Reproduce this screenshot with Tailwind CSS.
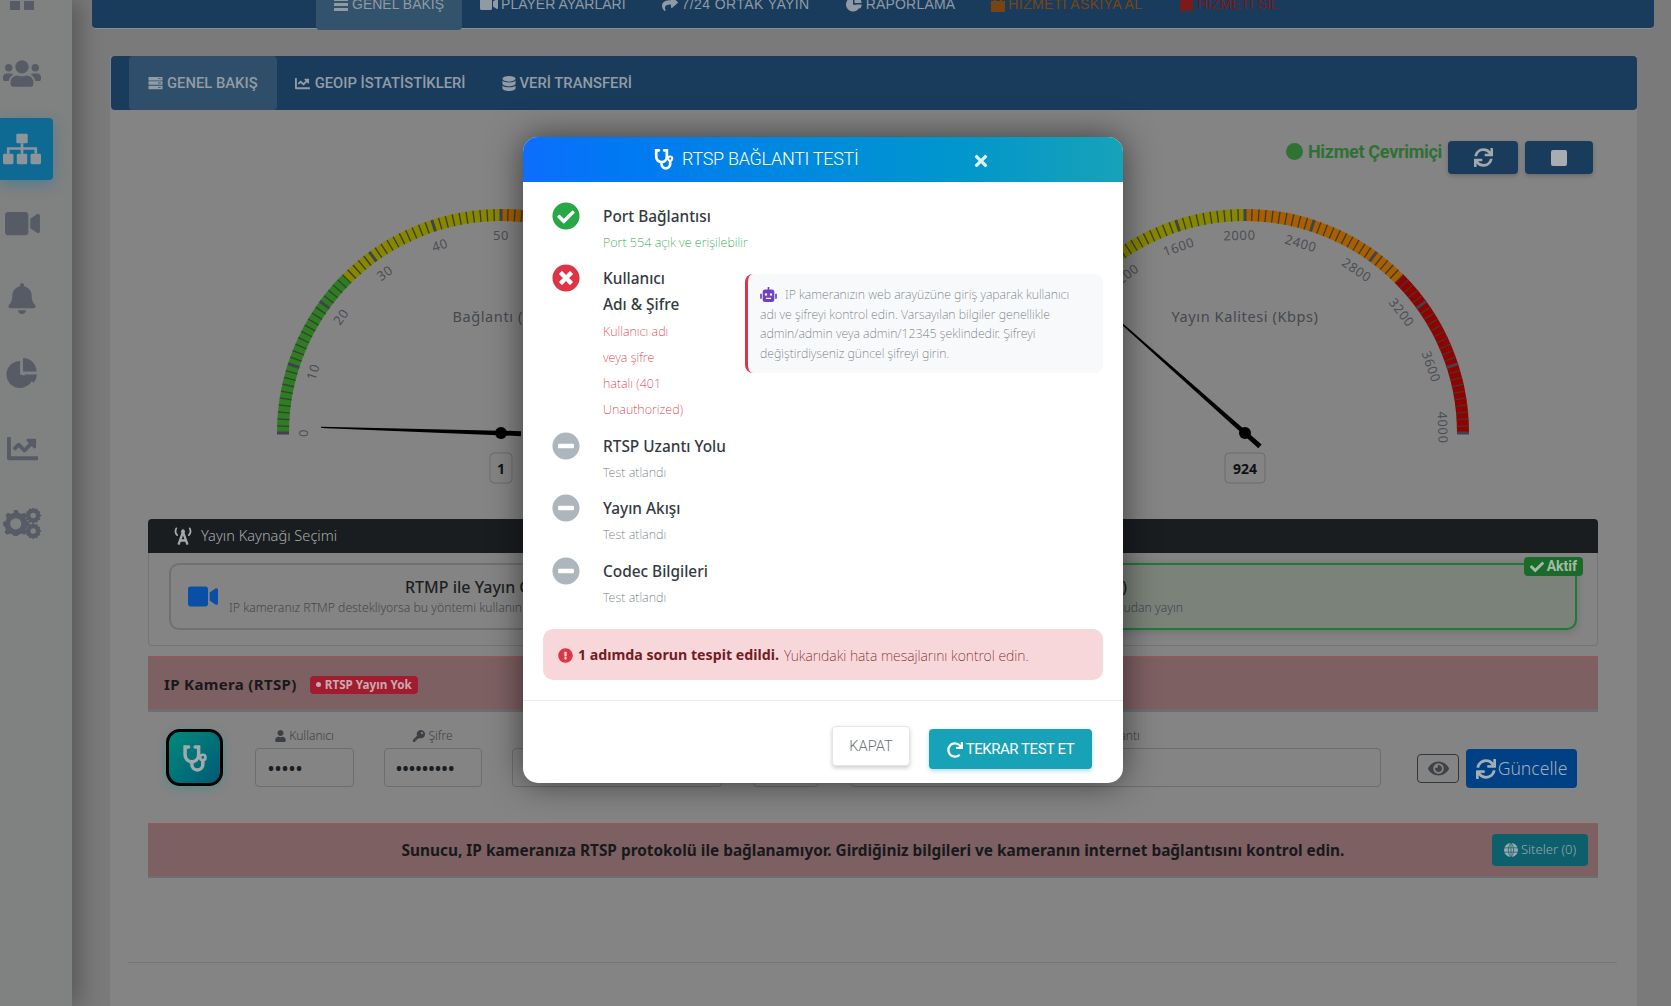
<!DOCTYPE html>
<html lang="tr">
<head>
  <meta charset="UTF-8" />
  <title>RTSP Bağlantı Testi</title>
  <script src="https://cdn.jsdelivr.net/npm/@tailwindcss/browser@4"></script>
</head>

<body class="relative h-[1006px] overflow-hidden bg-[#7a7a7a] font-['Roboto',sans-serif]">

  <!-- icon set -->
  <svg class="hidden">
    <symbol id="i-sync" viewBox="0 0 512 512"><path d="M440.65 12.57l4 82.77A247.16 247.16 0 0 0 255.83 8C134.73 8 33.91 94.92 12.29 209.82A12 12 0 0 0 24.09 224h49.05a12 12 0 0 0 11.67-9.26 175.91 175.91 0 0 1 317-56.94l-101.46-4.86a12 12 0 0 0-12.57 12v47.41a12 12 0 0 0 12 12H500a12 12 0 0 0 12-12V12a12 12 0 0 0-12-12h-47.37a12 12 0 0 0-11.98 12.57zM255.83 432a175.61 175.61 0 0 1-146-77.8l101.8 4.87a12 12 0 0 0 12.57-12v-47.4a12 12 0 0 0-12-12H12a12 12 0 0 0-12 12V500a12 12 0 0 0 12 12h47.35a12 12 0 0 0 12-12.6l-4.15-82.57A247.17 247.17 0 0 0 255.83 504c121.11 0 221.93-86.92 243.55-201.82a12 12 0 0 0-11.8-14.18h-49.05a12 12 0 0 0-11.67 9.26A175.86 175.86 0 0 1 255.83 432z"/></symbol>
    <symbol id="i-check-circle" viewBox="0 0 512 512"><path d="M504 256c0 136.967-111.033 248-248 248S8 392.967 8 256 119.033 8 256 8s248 111.033 248 248zM227.314 387.314l184-184c6.248-6.248 6.248-16.379 0-22.627l-22.627-22.627c-6.248-6.249-16.379-6.249-22.628 0L216 308.118l-70.059-70.059c-6.248-6.248-16.379-6.248-22.628 0l-22.627 22.627c-6.248 6.248-6.248 16.379 0 22.627l104 104c6.249 6.25 16.379 6.25 22.628.001z"/></symbol>
    <symbol id="i-times-circle" viewBox="0 0 512 512"><path d="M256 8C119 8 8 119 8 256s111 248 248 248 248-111 248-248S393 8 256 8zm121.6 313.1c4.7 4.7 4.7 12.3 0 17L338 377.6c-4.7 4.7-12.3 4.7-17 0L256 312l-65.1 65.6c-4.7 4.7-12.3 4.7-17 0L134.4 338c-4.7-4.7-4.7-12.3 0-17l65.6-65-65.6-65.1c-4.7-4.7-4.7-12.3 0-17l39.6-39.6c4.7-4.7 12.3-4.7 17 0l65 65.7 65.1-65.6c4.7-4.7 12.3-4.7 17 0l39.6 39.6c4.7 4.7 4.7 12.3 0 17L312 256l65.6 65.1z"/></symbol>
    <symbol id="i-minus-circle" viewBox="0 0 512 512"><path d="M256 8C119 8 8 119 8 256s111 248 248 248 248-111 248-248S393 8 256 8zM124 296c-6.6 0-12-5.4-12-12v-56c0-6.6 5.4-12 12-12h264c6.6 0 12 5.4 12 12v56c0 6.6-5.4 12-12 12H124z"/></symbol>
    <symbol id="i-exclamation" viewBox="0 0 512 512"><path d="M504 256c0 136.997-111.043 248-248 248S8 392.997 8 256C8 119.083 119.043 8 256 8s248 111.083 248 248zm-248 50c-25.405 0-46 20.595-46 46s20.595 46 46 46 46-20.595 46-46-20.595-46-46-46zm-43.673-165.346l7.418 136c.347 6.364 5.609 11.346 11.982 11.346h48.546c6.373 0 11.635-4.982 11.982-11.346l7.418-136c.375-6.874-5.098-12.654-11.982-12.654h-63.383c-6.884 0-12.356 5.78-11.981 12.654z"/></symbol>
    <symbol id="i-redo" viewBox="0 0 512 512"><path d="M500.33 0h-47.41a12 12 0 0 0-12 12.57l4 82.76A247.42 247.42 0 0 0 256 8C119.34 8 7.9 119.53 8 256.19 8.1 393.07 119.1 504 256 504a247.1 247.1 0 0 0 166.18-63.91 12 12 0 0 0 .48-17.43l-34-34a12 12 0 0 0-16.38-.55A176 176 0 1 1 402.1 157.8l-101.53-4.87a12 12 0 0 0-12.57 12v47.41a12 12 0 0 0 12 12h200.33a12 12 0 0 0 12-12V12a12 12 0 0 0-12-12z"/></symbol>
    <symbol id="i-check" viewBox="0 0 512 512"><path d="M173.898 439.404l-166.4-166.4c-9.997-9.997-9.997-26.206 0-36.204l36.203-36.204c9.997-9.998 26.207-9.998 36.204 0L192 312.69 432.095 72.596c9.997-9.997 26.207-9.997 36.204 0l36.203 36.204c9.997 9.997 9.997 26.206 0 36.204l-294.4 294.401c-9.998 9.997-26.207 9.997-36.204-.001z"/></symbol>
    <symbol id="i-times" viewBox="0 0 352 512"><path d="M242.72 256l100.07-100.07c12.28-12.28 12.28-32.19 0-44.48l-22.24-22.24c-12.28-12.28-32.19-12.28-44.48 0L176 189.28 75.93 89.21c-12.28-12.28-32.19-12.28-44.48 0L9.21 111.45c-12.28 12.28-12.28 32.19 0 44.48L109.28 256 9.21 356.07c-12.28 12.28-12.28 32.19 0 44.48l22.24 22.24c12.28 12.28 32.2 12.28 44.48 0L176 322.72l100.07 100.07c12.28 12.28 32.2 12.28 44.48 0l22.24-22.24c12.28-12.28 12.28-32.19 0-44.48L242.72 256z"/></symbol>
    <symbol id="i-video" viewBox="0 0 576 512"><path d="M336.2 64H47.8C21.4 64 0 85.4 0 111.8v288.4C0 426.6 21.4 448 47.8 448h288.4c26.4 0 47.8-21.4 47.8-47.8V111.8c0-26.4-21.4-47.8-47.8-47.8zm189.4 37.7L416 177.3v157.4l109.6 75.5c21.2 14.6 50.4-.3 50.4-25.8V127.5c0-25.4-29.1-40.4-50.4-25.8z"/></symbol>
    <symbol id="i-bell" viewBox="0 0 448 512"><path d="M224 512c35.32 0 63.97-28.65 63.97-64H160.03c0 35.35 28.65 64 63.97 64zm215.39-149.71c-19.32-20.76-55.47-51.99-55.47-154.29 0-77.7-54.48-139.9-127.94-155.16V32c0-17.67-14.32-32-31.98-32s-31.98 14.33-31.98 32v20.84C118.56 68.1 64.08 130.3 64.08 208c0 102.3-36.15 133.53-55.47 154.29-6 6.45-8.66 14.16-8.61 21.71.11 16.4 12.98 32 32.1 32h383.8c19.12 0 32-15.6 32.1-32 .05-7.55-2.61-15.27-8.61-21.71z"/></symbol>
    <symbol id="i-chart" viewBox="0 0 512 512"><path d="M496 384H64V80c0-8.84-7.16-16-16-16H16C7.16 64 0 71.16 0 80v336c0 17.67 14.33 32 32 32h464c8.84 0 16-7.16 16-16v-32c0-8.84-7.16-16-16-16zM464 96H345.94c-21.38 0-32.09 25.85-16.97 40.97l32.4 32.4L288 242.75l-73.37-73.37c-12.5-12.5-32.76-12.5-45.25 0l-68.69 68.69c-6.25 6.25-6.25 16.38 0 22.63l22.62 22.62c6.25 6.25 16.38 6.25 22.63 0L192 237.25l73.37 73.37c12.5 12.5 32.76 12.5 45.25 0l96-96 32.4 32.4c15.12 15.12 40.97 4.41 40.97-16.97V112c.01-8.84-7.15-16-15.99-16z"/></symbol>
    <symbol id="i-user" viewBox="0 0 448 512"><path d="M224 256c70.7 0 128-57.3 128-128S294.7 0 224 0 96 57.3 96 128s57.3 128 128 128zm89.6 32h-16.7c-22.2 10.2-46.9 16-72.9 16s-50.6-5.8-72.9-16h-16.7C60.2 288 0 348.2 0 422.4V464c0 26.5 21.5 48 48 48h352c26.5 0 48-21.5 48-48v-41.6c0-74.2-60.2-134.4-134.4-134.4z"/></symbol>
    <symbol id="i-users" viewBox="0 0 640 512"><path d="M96 224c35.3 0 64-28.7 64-64s-28.7-64-64-64-64 28.7-64 64 28.7 64 64 64zm448 0c35.3 0 64-28.7 64-64s-28.7-64-64-64-64 28.7-64 64 28.7 64 64 64zm32 32h-64c-17.6 0-33.5 7.1-45.1 18.6 40.3 22.1 68.9 62 75.1 109.4h66c17.7 0 32-14.3 32-32v-32c0-35.3-28.7-64-64-64zm-256 0c61.9 0 112-50.1 112-112S381.9 32 320 32 208 82.1 208 144s50.1 112 112 112zm76.8 32h-8.3c-20.8 10-43.9 16-68.5 16s-47.6-6-68.5-16h-8.3C179.6 288 128 339.6 128 403.2V432c0 26.5 21.5 48 48 48h288c26.5 0 48-21.5 48-48v-28.8c0-63.6-51.6-115.2-115.2-115.2zm-223.7-13.4C161.5 263.1 145.6 256 128 256H64c-35.3 0-64 28.7-64 64v32c0 17.7 14.3 32 32 32h65.9c6.3-47.4 34.9-87.3 75.2-109.4z"/></symbol>
    <symbol id="i-eye" viewBox="0 0 576 512"><path d="M572.52 241.4C518.29 135.59 410.93 64 288 64S57.68 135.64 3.48 241.41a32.35 32.35 0 0 0 0 29.19C57.71 376.41 165.07 448 288 448s230.32-71.64 284.52-177.41a32.35 32.35 0 0 0 0-29.19zM288 400a144 144 0 1 1 144-144 143.93 143.93 0 0 1-144 144zm0-240a95.31 95.31 0 0 0-25.31 3.79 47.85 47.85 0 0 1-66.9 66.9A95.78 95.78 0 1 0 288 160z"/></symbol>
    <symbol id="i-share" viewBox="0 0 512 512"><path d="M503.691 189.836L327.687 37.851C312.281 24.546 288 35.347 288 56.015v80.053C127.371 137.907 0 170.1 0 322.326c0 61.441 39.581 122.309 83.333 154.132 13.653 9.931 33.111-2.533 28.077-18.631C66.066 312.814 132.917 274.316 288 272.085V360c0 20.7 24.3 31.453 39.687 18.164l176.004-152c11.071-9.562 11.086-26.753 0-36.328z"/></symbol>
    <symbol id="i-stetho" viewBox="0 0 24 24"><path fill="none" stroke="currentColor" stroke-width="3" stroke-linecap="round" d="M6.500 2.500H3.500v7a5.800 5.800 0 0 0 11.600 0v-7h-3M9.300 15.500v2a4.700 4.700 0 0 0 9.400 0v-3"/><circle cx="18.700" cy="11.500" r="2.300" fill="none" stroke="currentColor" stroke-width="2.200"/></symbol>
    <symbol id="i-server" viewBox="0 0 16 16"><path d="M0 1h16v4H0zM0 6h16v4H0zM0 11h16v4H0z"/><path fill="#2f4e69" d="M11 2.500h3v1h-3zM11 7.500h3v1h-3zM11 12.500h3v1h-3z"/></symbol>
    <symbol id="i-database" viewBox="0 0 14 16"><ellipse cx="7" cy="3" rx="7" ry="3"/><path d="M0 4.700C1.500 6.300 4 6.800 7 6.800s5.500-.5 7-2.100V8c0 1.600-3.100 3-7 3S0 9.600 0 8zM0 10c1.500 1.600 4 2.100 7 2.100s5.500-.5 7-2.100v3c0 1.600-3.100 3-7 3s-7-1.400-7-3z"/></symbol>
    <symbol id="i-sitemap" viewBox="0 0 40 32"><rect x="14" width="12" height="10" rx="1.500"/><rect y="21" width="11" height="11" rx="1.500"/><rect x="14.500" y="21" width="11" height="11" rx="1.500"/><rect x="29" y="21" width="11" height="11" rx="1.500"/><path fill="none" stroke="currentColor" stroke-width="2.800" d="M20 10v11M5.500 21v-5.500h29V21"/></symbol>
    <symbol id="i-pie" viewBox="0 0 32 32"><path d="M14 3a14 14 0 1 0 13.500 17.500L14 17z"/><path d="M17 0a14 14 0 0 1 14 14H17z"/><path d="M18 17h13.500a14 14 0 0 1-3.500 8.500z"/></symbol>
    <symbol id="i-cogs" viewBox="0 0 40 32"><path fill-rule="evenodd" d="M11 6h4l1 3 3 1.300 3-1.300 2.500 2.500-1.300 3 1.300 3 2.500 1v3.500l-2.500 1-1.300 3 1.300 3-2.500 2.500-3-1.300-3 1.300-1 1.500h-4l-1-1.500-3-1.300-3 1.300-2.500-2.500 1.300-3-1.300-3L0 22v-3.500l2.500-1 1.300-3-1.300-3L5 9l3 1.300 3-1.300zM13 14.500a5.800 5.800 0 1 0 0 11.600 5.800 5.800 0 0 0 0-11.600z" transform="translate(0 -4)"/><path fill-rule="evenodd" d="M31 0l1.500 2 2.500-.5 1 2.300 2.300 1-.5 2.500 2 1.500-2 1.500.5 2.500-2.300 1-1 2.300-2.500-.5-1.500 2-1.500-2-2.500.5-1-2.300-2.300-1 .5-2.500-2-1.500 2-1.500-.5-2.500 2.300-1 1-2.300 2.500.5zM31 6a2.800 2.800 0 1 0 0 5.600A2.800 2.800 0 0 0 31 6z" transform="translate(0 -1)"/><path fill-rule="evenodd" d="M31 0l1.500 2 2.500-.5 1 2.300 2.300 1-.5 2.500 2 1.500-2 1.500.5 2.500-2.300 1-1 2.300-2.500-.5-1.500 2-1.500-2-2.500.5-1-2.300-2.300-1 .5-2.500-2-1.500 2-1.500-.5-2.500 2.300-1 1-2.300 2.500.5zM31 6a2.800 2.800 0 1 0 0 5.600A2.800 2.800 0 0 0 31 6z" transform="translate(0 15)"/></symbol>
    <symbol id="i-tower" viewBox="0 0 24 20"><path fill="none" stroke="currentColor" stroke-width="2.600" d="M7 19.500L12 5.500l5 14M8.500 15h7"/><circle cx="12" cy="5" r="2.200"/><path fill="none" stroke="currentColor" stroke-width="2" stroke-linecap="round" d="M4.500 1.500a6.500 6.500 0 0 0 1 7.500M19.500 1.500a6.500 6.500 0 0 1-1 7.500"/></symbol>
    <symbol id="i-globe" viewBox="0 0 16 16"><circle cx="8" cy="8" r="8"/><path fill="none" stroke="#0d5f6b" stroke-width=".8" d="M0 5.500h16M0 10.500h16M8 0v16M8 0C4 4 4 12 8 16M8 0c4 4 4 12 0 16"/></symbol>
    <symbol id="i-key" viewBox="0 0 16 16"><path d="M10.500 0a5.500 5.500 0 1 1-2 10.600L7 12H5v2H3v2H0v-3l5.400-5.400A5.500 5.500 0 0 1 10.500 0zm1.500 2.500a1.500 1.500 0 1 0 0 3 1.500 1.500 0 0 0 0-3z"/></symbol>
    <symbol id="i-robot" viewBox="0 0 20 18"><path fill-rule="evenodd" d="M9 0h2v3h3a3 3 0 0 1 3 3v9a3 3 0 0 1-3 3H6a3 3 0 0 1-3-3V6a3 3 0 0 1 3-3h3zM7 7.500a1.500 1.500 0 1 0 0 3 1.500 1.500 0 0 0 0-3zm6 0a1.500 1.500 0 1 0 0 3 1.500 1.500 0 0 0 0-3zM7 13v1.500h6V13z"/><path d="M0 8h2v6H0zM18 8h2v6h-2z"/></symbol>
  </svg>

  <div class="flex">

    <!-- Sidebar -->
    <aside class="w-[72px] h-[1006px] shrink-0 bg-[#808181] shadow-[8px_0_22px_rgba(0,0,0,0.28)] text-[#565b66]">
      <div class="-mt-[39px] flex flex-col">
        <div class="h-[75px] pl-[10px] flex items-center"><svg class="w-[26px] h-[24px]" viewBox="0 0 26 24" fill="currentColor"><path d="M0 2h10v9H0zM14 2h10v9H14zM0 14h10v9H0zM14 14h10v9H14z"/></svg></div>
        <div class="h-[75px] pl-[3px] flex items-center"><svg class="w-[38px] h-[31px]" fill="currentColor"><use href="#i-users"/></svg></div>
        <div class="h-[75px] flex items-center">
          <div class="w-[53px] h-[62px] pl-[3px] rounded-r-[4px] bg-[#0f6a93] shadow-[0_4px_14px_rgba(20,120,160,0.45)] flex items-center text-[#8d959c]">
            <svg class="w-[38px] h-[32px]" fill="currentColor"><use href="#i-sitemap"/></svg>
          </div>
        </div>
        <div class="h-[75px] pl-[5px] flex items-center"><svg class="w-[35px] h-[31px]" fill="currentColor"><use href="#i-video"/></svg></div>
        <div class="h-[75px] pl-[8px] flex items-center"><svg class="w-[28px] h-[31px]" fill="currentColor"><use href="#i-bell"/></svg></div>
        <div class="h-[75px] pl-[6px] flex items-center"><svg class="w-[32px] h-[31px]" fill="currentColor"><use href="#i-pie"/></svg></div>
        <div class="h-[75px] pl-[7px] flex items-center"><svg class="w-[31px] h-[31px]" fill="currentColor"><use href="#i-chart"/></svg></div>
        <div class="h-[75px] pl-[3px] flex items-center"><svg class="w-[39px] h-[31px]" fill="currentColor"><use href="#i-cogs"/></svg></div>
      </div>
    </aside>

    <main class="flex-1">

      <!-- Top service nav (scrolled partly out of view) -->
      <nav class="ml-[20px] w-[1562px] h-[29px] bg-[#1a3c5c] rounded-b-[4px] pl-[224px] flex text-[#8f9aa5] border-b border-[#8a8f94]">
        <div class="px-[18px] h-[30px] bg-[#33526c] rounded-b-[4px] flex items-start overflow-hidden">
          <span class="-mt-[6px] flex items-center gap-[4px] leading-[20px] font-['Liberation_Sans',sans-serif] text-[14px]"><svg class="w-[14px] h-[14px]" viewBox="0 0 14 14" fill="currentColor"><path d="M0 1h14v3H0zM0 6h14v3H0zM0 11h14v3H0z"/></svg>GENEL BAKIŞ</span>
        </div>
        <div class="px-[18px] overflow-hidden"><span class="-mt-[6px] flex items-center gap-[3px] leading-[20px] font-['Liberation_Sans',sans-serif] text-[14px]"><svg class="w-[18px] h-[16px]" fill="currentColor"><use href="#i-video"/></svg>PLAYER AYARLARI</span></div>
        <div class="px-[18px] overflow-hidden"><span class="-mt-[6px] flex items-center gap-[4px] leading-[20px] font-['Liberation_Sans',sans-serif] text-[14px] tracking-[0.4px]"><svg class="w-[16px] h-[16px]" fill="currentColor"><use href="#i-share"/></svg>7/24 ORTAK YAYIN</span></div>
        <div class="px-[18px] overflow-hidden"><span class="-mt-[6px] flex items-center gap-[4px] leading-[20px] font-['Liberation_Sans',sans-serif] text-[14px] tracking-[0.2px]"><svg class="w-[16px] h-[16px]" fill="currentColor"><use href="#i-pie"/></svg>RAPORLAMA</span></div>
        <div class="px-[18px] overflow-hidden text-[#7a4410]"><span class="-mt-[6px] flex items-center gap-[3px] leading-[20px] font-['Liberation_Sans',sans-serif] text-[14px] tracking-[0.35px]"><svg class="w-[14px] h-[16px]" viewBox="0 0 14 16" fill="currentColor"><path d="M0 5h14v11H0zM3 0h2v5H3zM9 0h2v5H9z"/></svg>HİZMETİ ASKIYA AL</span></div>
        <div class="ml-[2px] px-[18px] overflow-hidden text-[#7a1a1a]"><span class="-mt-[6px] flex items-center gap-[4px] leading-[20px] font-['Liberation_Sans',sans-serif] text-[14px]"><svg class="w-[13px] h-[16px]" viewBox="0 0 13 16" fill="currentColor"><path d="M0 1h13v14H0z"/></svg>HİZMETİ SİL</span></div>
      </nav>

      <!-- Service card -->
      <section class="mt-[27px] ml-[38px] w-[1527px] h-[950px] bg-[#848484]">
        <nav class="ml-[1px] h-[54px] bg-[#1a3c5c] rounded-[4px] pl-[18px] flex text-[14.8px] font-medium text-[#929ca6]">
          <div class="px-[19px] bg-[#2f4e69] rounded-[4px] flex items-center gap-[4px]"><svg class="w-[15px] h-[14px]" fill="currentColor"><use href="#i-server"/></svg>GENEL BAKIŞ</div>
          <div class="px-[18px] flex items-center gap-[5px]"><svg class="w-[15px] h-[15px]" fill="currentColor"><use href="#i-chart"/></svg>GEOIP İSTATİSTİKLERİ</div>
          <div class="px-[18px] flex items-center gap-[4px]"><svg class="w-[14px] h-[15px]" fill="currentColor"><use href="#i-database"/></svg>VERİ TRANSFERİ</div>
        </nav>

        <!-- Status + controls -->
        <div class="mt-[31px] h-[33px] pr-[44px] flex justify-end items-start">
          <span class="mt-[2px] w-[17px] h-[17px] rounded-full bg-[#2e7332]"></span>
          <span class="ml-[5px] mr-[6px] leading-[22px] text-[18px] font-bold tracking-[-0.3px] text-[#2f7034]">Hizmet Çevrimiçi</span>
          <button class="w-[70px] h-[33px] bg-[#1a3c5c] rounded-[4px] shadow-[0_2px_4px_rgba(0,0,0,0.2)] flex items-center justify-center text-[#a3a8ad]"><svg class="w-[19px] h-[19px]" fill="currentColor"><use href="#i-sync"/></svg></button>
          <button class="ml-[7px] w-[68px] h-[33px] bg-[#1a3c5c] rounded-[4px] shadow-[0_2px_4px_rgba(0,0,0,0.2)] flex items-center justify-center"><span class="w-[16px] h-[16px] rounded-[2px] bg-[#a9adb1]"></span></button>
        </div>

        <!-- Gauges, drawn by the script at the bottom -->
        <svg id="gauges" class="mt-[26px] block" width="1527" height="290" viewBox="0 0 1527 290"></svg>

        <!-- Source selection -->
        <div class="mt-[29px] ml-[38px] w-[1450px]">
          <div class="h-[34px] bg-[#1a1d20] rounded-t-[4px] pl-[24px] flex items-center gap-[7px] text-[14.6px] text-[#a6a9ab] font-['Noto_Sans',sans-serif] font-light">
            <svg class="w-[22px] h-[18px]" fill="currentColor"><use href="#i-tower"/></svg>Yayın Kaynağı Seçimi
          </div>
          <div class="h-[93px] border border-t-0 border-[#747474] rounded-b-[4px] px-[20px] pt-[10px] grid grid-cols-2 gap-[21px]">
            <div class="h-[67px] border-2 border-[#6f7071] rounded-[10px] pl-[17px] flex items-center font-['Noto_Sans',sans-serif]">
              <svg class="w-[30px] h-[27px] shrink-0 text-[#0a4fa6]" fill="currentColor"><use href="#i-video"/></svg>
              <div class="ml-[11px] mt-[1px]">
                <div class="ml-[176px] text-[16px] leading-[20px] font-medium text-[#1c1f22]">RTMP ile Yayın Gönder</div>
                <div class="mt-[2px] text-[12.2px] leading-[18px] font-light text-[#43474b]">IP kameranız RTMP destekliyorsa bu yöntemi kullanın</div>
              </div>
            </div>
            <div class="h-[67px] border-2 border-[#1f7a35] rounded-[10px] bg-[#7a8279] shadow-[0_2px_8px_rgba(0,0,0,0.15)] relative pt-[1px] pr-[392px] flex flex-col items-end justify-center font-['Noto_Sans',sans-serif]">
              <div class="mr-[56px] text-[16px] leading-[20px] font-medium text-[#1c1f22]">IP Kamera (RTSP)</div>
              <div class="mt-[2px] text-[12.2px] leading-[18px] font-light text-[#43474b]">Kameradan doğrudan yayın</div>
              <span class="absolute -top-[8px] -right-[8px] h-[19px] px-[6px] rounded-[4px] bg-[#1a6b2a] flex items-center gap-[3px] text-[14px] font-bold text-[#a6b8a8] font-['Roboto',sans-serif]"><svg class="w-[14px] h-[14px]" fill="currentColor"><use href="#i-check"/></svg>Aktif</span>
            </div>
          </div>

          <!-- RTSP panel -->
          <div class="mt-[10px] h-[56px] bg-[#7d6062] border-t border-[#a0545a] border-b-[3px] border-b-[#6c6e70] pl-[16px] pt-[2px] flex items-center gap-[13px] font-['Noto_Sans',sans-serif]">
            <span class="text-[15px] font-bold tracking-[0.35px] text-[#17191b]">IP Kamera (RTSP)</span>
            <span class="mt-[1px] h-[18px] px-[6px] rounded-[4px] bg-[#a01d30] flex items-center gap-[4px] text-[11.7px] font-bold text-[#c9aab0]"><span class="w-[5px] h-[5px] rounded-full bg-[#c9aab0]"></span>RTSP Yayın Yok</span>
          </div>

          <div class="flex items-start pl-[18px] pt-[13px] font-['Noto_Sans',sans-serif] text-[12px] font-light text-[#3c4045]">
            <button class="mt-[4px] w-[57px] h-[57px] rounded-[14px] border-[3px] border-black bg-gradient-to-br from-[#008a7c] to-[#005a74] shadow-[0_2px_10px_rgba(0,150,140,0.4)] flex items-center justify-center text-[#a3aaad]"><svg class="w-[28px] h-[28px]"><use href="#i-stetho"/></svg></button>
            <div class="ml-[32px] w-[99px]">
              <div class="h-[21px] mb-[2px] flex items-center justify-center gap-[3px]"><svg class="w-[11px] h-[12px]" fill="currentColor"><use href="#i-user"/></svg>Kullanıcı</div>
              <div class="h-[39px] border border-[#6c6d6e] rounded-[4px] pl-[12px] flex items-center text-[16px] font-bold tracking-[1px] text-[#1b1d1f]">•••••</div>
            </div>
            <div class="ml-[30px] w-[98px]">
              <div class="h-[21px] mb-[2px] flex items-center justify-center gap-[3px]"><svg class="w-[12px] h-[12px]" fill="currentColor"><use href="#i-key"/></svg>Şifre</div>
              <div class="h-[39px] border border-[#6c6d6e] rounded-[4px] pl-[11px] flex items-center text-[16px] font-bold tracking-[0.5px] text-[#1b1d1f]">•••••••••</div>
            </div>
            <div class="ml-[30px] w-[210px] mt-[23px] h-[39px] border border-[#6c6d6e] rounded-[4px]"></div>
            <div class="ml-[31px] w-[66px] mt-[23px] h-[39px] border border-[#6c6d6e] rounded-[4px]"></div>
            <div class="ml-[31px] w-[531px]">
              <div class="h-[21px] mb-[2px] pl-[14px] flex items-center justify-center">Uzantı</div>
              <div class="h-[39px] border border-[#6c6d6e] rounded-[4px]"></div>
            </div>
            <button class="ml-[36px] mt-[29px] w-[42px] h-[29px] border border-[#33373a] rounded-[4px] flex items-center justify-center text-[#3f4347]"><svg class="w-[21px] h-[19px]" fill="currentColor"><use href="#i-eye"/></svg></button>
            <button class="ml-[7px] mt-[24px] w-[111px] h-[39px] rounded-[4px] bg-[#004085] flex items-center justify-center gap-[2px] text-[17.6px] text-[#a3adb8] font-['Noto_Sans',sans-serif] font-light"><svg class="w-[20px] h-[20px]" fill="currentColor"><use href="#i-sync"/></svg>Güncelle</button>
          </div>

          <div class="relative mt-[35px] h-[55px] pt-[2px] bg-[#7d6062] border-t border-[#a0545a] border-b-[2px] border-b-[#6c6e70] flex items-center justify-center font-['Noto_Sans',sans-serif] text-[15.38px] font-bold text-[#17191b]">
            Sunucu, IP kameranıza RTSP protokolü ile bağlanamıyor. Girdiğiniz bilgileri ve kameranın internet bağlantısını kontrol edin.
            <button class="absolute right-[10px] top-[10px] w-[96px] h-[32px] rounded-[4px] bg-[#0d5f6b] flex items-center justify-center gap-[3px] text-[13px] font-light text-[#9aa9ad]"><svg class="w-[14px] h-[14px]" fill="currentColor"><use href="#i-globe"/></svg>Siteler (0)</button>
          </div>
        </div>

        <hr class="mt-[84px] ml-[18px] w-[1489px] border-[#777]" />
      </section>
    </main>
  </div>

  <!-- Test modal -->
  <div class="absolute left-[523px] top-[137px] w-[600px] h-[646px] bg-white rounded-[15px] overflow-hidden shadow-[0_0_34px_rgba(0,0,0,0.55)] font-['Noto_Sans',sans-serif]">
    <div class="h-[45px] bg-gradient-to-r from-[#0d6efd] to-[#17a2b8] pl-[130px] flex items-center text-white">
      <svg class="w-[22px] h-[22px] -mt-[1px]"><use href="#i-stetho"/></svg>
      <span class="ml-[7px] -mt-[2px] font-['Roboto',sans-serif] font-light text-[18px] tracking-[-0.3px]">RTSP BAĞLANTI TESTİ</span>
      <svg class="ml-[115px] mt-[3px] w-[14px] h-[18px] text-[#dff1f5]" fill="currentColor"><use href="#i-times"/></svg>
    </div>

    <div class="pl-[29px] pt-[20px]">
      <div class="flex pb-[8px]">
        <svg class="w-[28px] h-[28px] shrink-0 text-[#28a745]" fill="currentColor"><use href="#i-check-circle"/></svg>
        <div class="ml-[23px] pt-[2px] leading-[26px]">
          <div class="text-[15.4px] font-medium text-[#343a40]">Port Bağlantısı</div>
          <div class="text-[12.6px] font-[250] text-[#28a745]">Port 554 açık ve erişilebilir</div>
        </div>
      </div>

      <div class="flex pb-[9px]">
        <svg class="w-[28px] h-[28px] shrink-0 text-[#dc3545]" fill="currentColor"><use href="#i-times-circle"/></svg>
        <div class="ml-[23px] pt-[2px] w-[142px] shrink-0 leading-[26px]">
          <div class="text-[15.4px] font-medium text-[#343a40]">Kullanıcı<br />Adı &amp; Şifre</div>
          <div class="mt-[1px] text-[12.6px] font-[250] text-[#dc3545]">Kullanıcı adı<br />veya şifre<br />hatalı (401<br />Unauthorized)</div>
        </div>
        <div class="mt-[10px] w-[358px] h-[99px] bg-[#f8f9fa] border-l-[3px] border-[#dc3545] rounded-[8px] pl-[12px] pr-[28px] pt-[11px] text-[12.35px] font-[250] leading-[19.7px] text-[#6c757d]">
          <svg class="inline-block w-[17px] h-[15px] mr-[8px] -mt-[2px] text-[#6f42c1]" fill="currentColor"><use href="#i-robot"/></svg>IP kameranızın web arayüzüne giriş yaparak kullanıcı adı ve şifreyi kontrol edin. Varsayılan bilgiler genellikle admin/admin veya admin/12345 şeklindedir. Şifreyi değiştirdiyseniz güncel şifreyi girin.
        </div>
      </div>

      <div class="flex pb-[8px]">
        <svg class="w-[28px] h-[28px] shrink-0 text-[#adb5bd]" fill="currentColor"><use href="#i-minus-circle"/></svg>
        <div class="ml-[23px] pt-[2px] leading-[26px]">
          <div class="text-[15.4px] font-medium text-[#343a40]">RTSP Uzantı Yolu</div>
          <div class="text-[12.6px] font-[250] text-[#6c757d]">Test atlandı</div>
        </div>
      </div>

      <div class="flex pb-[9px]">
        <svg class="w-[28px] h-[28px] shrink-0 text-[#adb5bd]" fill="currentColor"><use href="#i-minus-circle"/></svg>
        <div class="ml-[23px] pt-[2px] leading-[26px]">
          <div class="text-[15.4px] font-medium text-[#343a40]">Yayın Akışı</div>
          <div class="text-[12.6px] font-[250] text-[#6c757d]">Test atlandı</div>
        </div>
      </div>

      <div class="flex">
        <svg class="w-[28px] h-[28px] shrink-0 text-[#adb5bd]" fill="currentColor"><use href="#i-minus-circle"/></svg>
        <div class="ml-[23px] pt-[2px] leading-[26px]">
          <div class="text-[15.4px] font-medium text-[#343a40]">Codec Bilgileri</div>
          <div class="text-[12.6px] font-[250] text-[#6c757d]">Test atlandı</div>
        </div>
      </div>
    </div>

    <div class="mt-[18px] mx-[20px] h-[51px] pt-[1px] bg-[#f8d7da] rounded-[10px] pl-[15px] flex items-center text-[14px] text-[#721c24]">
      <svg class="w-[15px] h-[15px] text-[#dc3545]" fill="currentColor"><use href="#i-exclamation"/></svg>
      <span class="ml-[5px] text-[14.2px] font-bold">1 adımda sorun tespit edildi.</span>
      <span class="ml-[5px] text-[14px] font-[250]">Yukarıdaki hata mesajlarını kontrol edin.</span>
    </div>

    <div class="mt-[20px] border-t border-[#e9ecef] pr-[31px] flex justify-end items-start">
      <button class="mt-[25px] w-[78px] h-[40px] pt-[1px] bg-white border border-[#e3e6e8] rounded-[4px] shadow-[0_2px_4px_rgba(0,0,0,0.2)] font-['Roboto',sans-serif] font-light text-[14.7px] text-[#6c757d]">KAPAT</button>
      <button class="mt-[28px] ml-[19px] w-[163px] h-[40px] pt-[1px] bg-[#17a2b8] rounded-[4px] shadow-[0_2px_4px_rgba(23,162,184,0.35)] flex items-center justify-center gap-[3px] font-['Roboto',sans-serif] text-[15px] tracking-[-0.45px] text-white"><svg class="w-[16px] h-[16px]" fill="currentColor"><use href="#i-redo"/></svg>TEKRAR TEST ET</button>
    </div>
  </div>

  <script>
    const svg = document.getElementById("gauges");
    const NS = "http://www.w3.org/2000/svg";

    function add(tag, attrs, text) {
      const el = document.createElementNS(NS, tag);
      for (const k in attrs) el.setAttribute(k, attrs[k]);
      if (text !== undefined) el.textContent = text;
      svg.appendChild(el);
      return el;
    }

    function point(cx, cy, r, deg) {
      const a = deg * Math.PI / 180;
      return [cx + r * Math.cos(a), cy - r * Math.sin(a)];
    }

    function arcBand(cx, cy, from, to, color) {
      const [x1, y1] = point(cx, cy, 218, from);
      const [x2, y2] = point(cx, cy, 218, to);
      add("path", { d: `M${x1} ${y1}A218 218 0 0 1 ${x2} ${y2}`, fill: "none", stroke: color, "stroke-width": 12 });
    }

    function gauge(cx, cy, max, step, title, value) {
      arcBand(cx, cy, 180, 135, "#2f7d22");
      arcBand(cx, cy, 135, 90, "#878700");
      arcBand(cx, cy, 90, 45, "#a85f00");
      arcBand(cx, cy, 45, 0, "#930000");

      // minor ticks every 1.8 degrees, major every 18
      for (let i = 0; i <= 100; i++) {
        const deg = 180 - i * 1.8;
        const major = i % 10 === 0;
        const [x1, y1] = point(cx, cy, 212, deg);
        const [x2, y2] = point(cx, cy, 224, deg);
        add("line", { x1, y1, x2, y2, stroke: major ? "#3f434c" : "#3a3d33", "stroke-width": major ? 3 : 1.3 });
      }

      for (let v = 0; v <= max; v += step) {
        const label = String(v);
        const shift = label.length === 4 ? 1.6 : 0;
        const deg = 180 - v / max * 180 + shift;
        const [x, y] = point(cx, cy, 198, deg);
        add("text", {
          x, y, "text-anchor": "middle", "dominant-baseline": "central",
          transform: `rotate(${90 - deg} ${x} ${y})`,
          "font-family": "Noto Sans", "font-size": 13, "letter-spacing": 0.6, fill: "#4c4f55"
        }, label);
      }

      add("text", {
        x: cx, y: cy - 117, "text-anchor": "middle", "dominant-baseline": "central",
        "font-family": "Noto Sans", "font-size": 14.5, "letter-spacing": 0.6, fill: "#45484d"
      }, title);

      // tapered needle
      const deg = 180 - value / max * 180;
      const [tx, ty] = point(cx, cy, 180, deg);
      const [bx, by] = point(cx, cy, 20, deg + 180);
      const [px, py] = [Math.sin(deg * Math.PI / 180), Math.cos(deg * Math.PI / 180)];
      add("polygon", {
        points: `${tx + px * 0.7},${ty + py * 0.7} ${bx + px * 2.5},${by + py * 2.5} ${bx - px * 2.5},${by - py * 2.5} ${tx - px * 0.7},${ty - py * 0.7}`,
        fill: "#000"
      });
      add("circle", { cx, cy, r: 6, fill: "#000" });

      const boxW = value > 99 ? 40 : 22;
      add("rect", { x: cx - boxW / 2, y: cy + 20, width: boxW, height: 30, rx: 4, fill: "none", stroke: "#6a6c6e" });
      add("text", {
        x: cx, y: cy + 35, "text-anchor": "middle", "dominant-baseline": "central",
        "font-family": "Noto Sans", "font-size": 14, "font-weight": 700, fill: "#111"
      }, value);
    }

    gauge(391, 233, 100, 10, "Bağlantı (ms)", 1);
    gauge(1135, 233, 4000, 400, "Yayın Kalitesi (Kbps)", 924);
  </script>
</body>
</html>
